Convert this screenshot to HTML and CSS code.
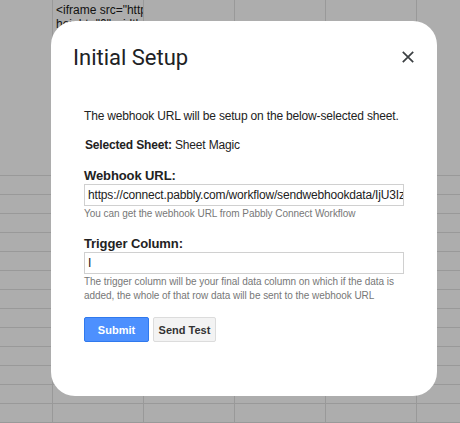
FILE: index.html
```html
<!DOCTYPE html>
<html>
<head>
<meta charset="utf-8">
<link rel="stylesheet" href="styles.css">
</head>
<body>
<div class="sheet">
  <div class="cell"></div>
  <div class="cell top-text"><div class="line">&lt;iframe src="https://connect.pabbly.com</div><div class="line">height="0" width="0"</div></div>
  <div class="cell"></div><div class="cell"></div><div class="cell"></div><div class="cell last"></div>
</div>
<div class="rows"></div>

<div class="dialog">
  <div class="header">
    <h1 class="title">Initial Setup</h1>
    <button class="close" aria-label="Close">
      <svg width="12" height="12" viewBox="0 0 12 12"><path d="M0.8 0.8 L11.2 11.2 M11.2 0.8 L0.8 11.2" stroke="#3c4043" stroke-width="1.7" fill="none"/></svg>
    </button>
  </div>
  <div class="content">
    <p class="intro">The webhook URL will be setup on the below-selected sheet.</p>
    <p class="selected"><b>Selected Sheet:</b> Sheet Magic</p>
    <label class="label">Webhook URL:</label>
    <div class="input">https://connect.pabbly.com/workflow/sendwebhookdata/IjU3IzYyNjI0MzE2ZjQ</div>
    <p class="hint">You can get the webhook URL from Pabbly Connect Workflow</p>
    <label class="label second">Trigger Column:</label>
    <div class="input">I</div>
    <p class="hint">The trigger column will be your final data column on which if the data is added, the whole of that row data will be sent to the webhook URL</p>
    <div class="buttons">
      <button class="btn primary">Submit</button>
      <button class="btn">Send Test</button>
    </div>
  </div>
</div>
</body>
</html>
```
FILE: styles.css
```css
html, body {
  margin: 0;
  padding: 0;
  width: 460px;
  height: 423px;
  overflow: hidden;
  background: #adadad;
  font-family: "Liberation Sans", Arial, sans-serif;
}
.sheet {
  display: grid;
  grid-template-columns: 53px 91px 91px 91px 91px 1fr;
  height: 176px;
}
.cell {
  box-sizing: border-box;
  border-right: 1px solid #999;
  border-bottom: 1px solid #999;
  overflow: hidden;
}
.cell.last { border-right: none; }
.top-text {
  padding: 3px 0 0 3px;
  font-size: 12px;
  line-height: 14px;
  color: #111;
}
.line { white-space: nowrap; }
.rows {
  height: 247px;
  background-image:
    linear-gradient(to right, transparent 52px, #999 52px, #999 53px, transparent 53px,
      transparent 143px, #999 143px, #999 144px, transparent 144px,
      transparent 234px, #999 234px, #999 235px, transparent 235px,
      transparent 325px, #999 325px, #999 326px, transparent 326px,
      transparent 416px, #999 416px, #999 417px, transparent 417px),
    repeating-linear-gradient(to bottom, transparent 0, transparent 18px, #999 18px, #999 19px);
}
.dialog {
  position: absolute;
  left: 51px;
  top: 21px;
  width: 386px;
  height: 375px;
  box-sizing: border-box;
  background: #fff;
  border-radius: 24px;
}
.header {
  display: flex;
  justify-content: space-between;
  align-items: center;
  padding: 23px 23px 0 22px;
}
.title {
  margin: 0;
  font-family: Roboto, "Open Sans", sans-serif;
  font-weight: 400;
  font-size: 22px;
  line-height: 28px;
  color: #202124;
}
.close {
  border: none;
  background: none;
  padding: 0;
  width: 12px;
  height: 12px;
  display: flex;
  margin-top: -2px;
}
.content {
  padding: 0 33px;
  display: flex;
  flex-direction: column;
  color: #222;
  letter-spacing: -0.17px;
}
.intro {
  margin: 37px 0 0;
  font-size: 12px;
  line-height: 14px;
  white-space: nowrap;
}
.selected {
  margin: 15px 0 0;
  font-size: 12px;
  line-height: 14px;
  padding-left: 1px;
}
.label {
  margin-top: 16px;
  font-size: 13px;
  font-weight: bold;
  line-height: 15px;
  letter-spacing: -0.1px;
}
.label.second { margin-top: 15px; }
.input {
  margin-top: 1px;
  box-sizing: border-box;
  height: 22px;
  border: 1px solid #d0d0d0;
  padding: 0 3px;
  font-size: 12px;
  line-height: 20px;
  white-space: nowrap;
  overflow: hidden;
  color: #222;
}
.hint {
  margin: 1px 0 0;
  font-size: 10px;
  line-height: 14px;
  color: #777;
  letter-spacing: -0.05px;
}
.buttons {
  display: flex;
  gap: 4px;
  margin-top: 14px;
}
.btn {
  box-sizing: border-box;
  height: 25px;
  width: 63px;
  padding: 0;
  border: 1px solid #dcdcdc;
  border-radius: 2px;
  background: #f3f3f3;
  color: #333;
  font-family: "Liberation Sans", Arial, sans-serif;
  font-size: 11px;
  font-weight: bold;
}
.btn.primary {
  width: 65px;
  background: #4d90fe;
  border-color: #3079ed;
  color: #fff;
}
```
